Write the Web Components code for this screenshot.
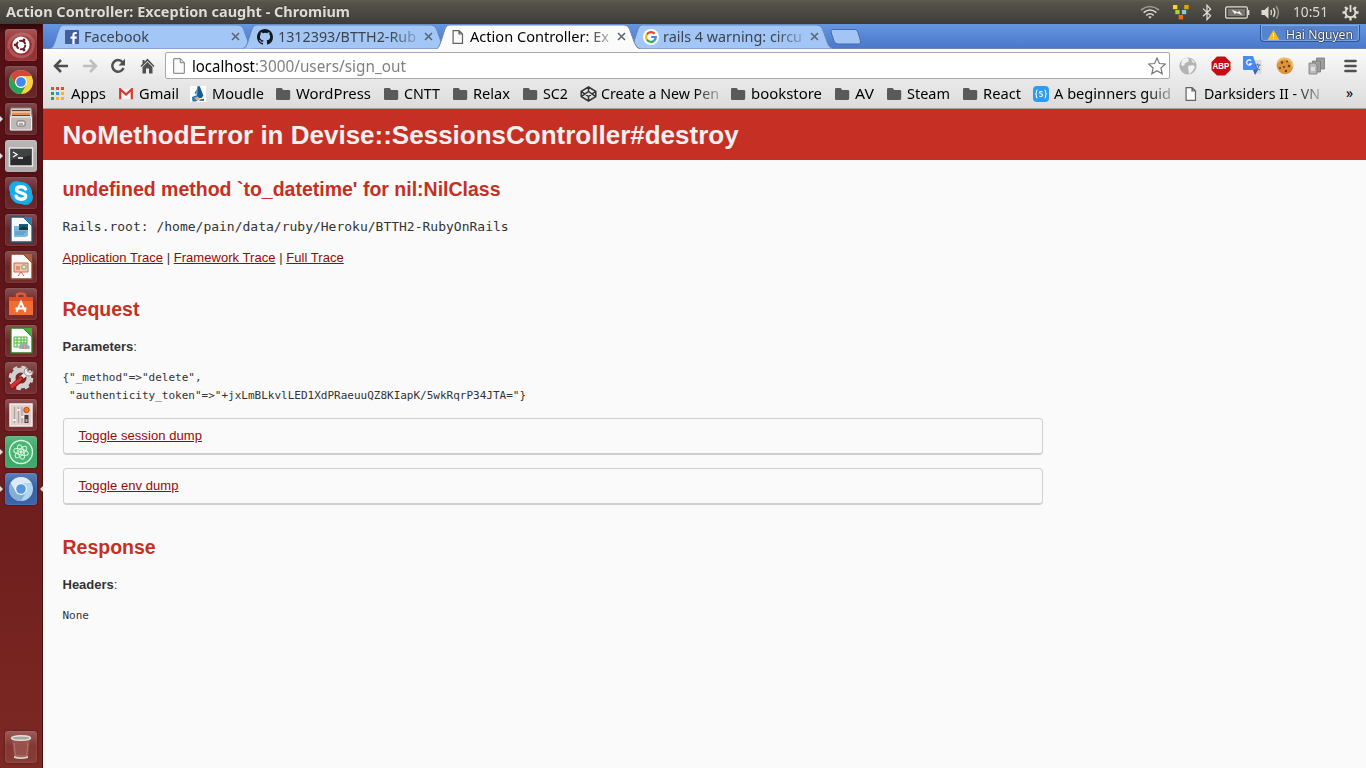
<!DOCTYPE html>
<html lang="en">
<head>
<meta charset="utf-8">
<title>Action Controller: Exception caught</title>
<style>
html,body{margin:0;height:100%;overflow:hidden;background:#fafafa}
</style>
</head>
<body>
<ubuntu-desktop></ubuntu-desktop>
<script>
const define = (name, html, setup) => customElements.define(name, class extends HTMLElement {
  connectedCallback() {
    if (this.shadowRoot) return;
    this.attachShadow({mode: 'open'}).innerHTML = typeof html === 'function' ? html(this) : html;
    if (setup) setup(this, this.shadowRoot);
  }
});

const ICONS = {
  fb: '<svg width="14" height="14" viewBox="0 0 14 14"><rect width="14" height="14" rx=".6" fill="#43609c"/><path d="M7.4 14V8.7H5.6V6.6h1.8V5c0-2 1.1-3 2.9-3h1.5v2h-1.1c-.9 0-1.1.4-1.1 1.1v1.5h2.2l-.3 2.1H9.6V14z" fill="#fff"/></svg>',
  github: '<svg width="16" height="16" viewBox="0 0 16 16"><path fill="#16191c" d="M8 0C3.58 0 0 3.58 0 8c0 3.54 2.29 6.53 5.47 7.59.4.07.55-.17.55-.38v-1.49c-2.01.37-2.53-.49-2.69-.94-.09-.23-.48-.94-.82-1.13-.28-.15-.68-.52-.01-.53.63-.01 1.08.58 1.23.82.72 1.21 1.87.87 2.33.66.07-.52.28-.87.51-1.07-1.78-.2-3.64-.89-3.64-3.95 0-.87.31-1.59.82-2.15-.08-.2-.36-1.02.08-2.12 0 0 .67-.21 2.2.82a7.6 7.6 0 0 1 4 0c1.53-1.04 2.2-.82 2.2-.82.44 1.1.16 1.92.08 2.12.51.56.82 1.27.82 2.15 0 3.07-1.87 3.75-3.65 3.95.29.25.54.73.54 1.48v2.2c0 .21.15.46.55.38A8 8 0 0 0 16 8c0-4.42-3.58-8-8-8z"/></svg>',
  doc: '<svg width="12" height="14" viewBox="0 0 12 14"><path d="M1.1.7h6L10.5 4v9.3H1.1zM7 .7V4h3.5" fill="#fbfbfb" stroke="#636363" stroke-width="1.2"/></svg>',
  google: '<svg width="16" height="16" viewBox="0 0 16 16"><circle cx="8" cy="8" r="8" fill="#fff"/><g fill="none" stroke-width="2.2"><path d="M3.8 5.6A4.8 4.8 0 0 1 11.6 4.8" stroke="#ea4335"/><path d="M3.8 5.5A4.8 4.8 0 0 0 3.9 10.6" stroke="#fbbc05"/><path d="M3.9 10.5A4.8 4.8 0 0 0 11.2 11.6" stroke="#34a853"/><path d="M8.2 8h4.6A4.8 4.8 0 0 1 11.1 11.7" stroke="#4285f4"/></g></svg>',
  apps: '<svg width="15" height="14" viewBox="0 0 15 14"><path fill="#e8453c" d="M1 0h3v3H1zM6 0h3v3H6zM11 0h3v3h-3z"/><path fill="#4587f4" d="M6 5h3v3H6z"/><path fill="#2ba14c" d="M1 5h3v3H1zM1 10h3v3H1z"/><path fill="#f9b80c" d="M11 5h3v3h-3zM6 10h3v3H6zM11 10h3v3h-3z"/></svg>',
  gmail: '<svg width="14" height="12" viewBox="0 0 14 12"><path d="M1 1h12v10H1z" fill="#f5f5f5"/><path d="M1.2 11.2V1.3L7 6.6l5.8-5.3v9.9" fill="none" stroke="#d5382e" stroke-width="2.2"/></svg>',
  moudle: '<svg width="16" height="16" viewBox="0 0 16 16"><path fill="#fdfdfd" d="M0 0h16v16H0z"/><path d="M7.4.2h2.4l3.6 9.6-2 2.5-4.4-.6z" fill="#155b94"/><path d="M7 3 4.6 6.8 6.4 9zM2 11l4.6-1.7 3 3.6L6 15.5H2.4z" fill="#2878b5"/><path d="m4 12 4-1.4 1.4 2.3L7 14.6z" fill="#e6b183"/><path d="m10 13.5 4-.8v2H9z" fill="#39556f"/></svg>',
  folder: '<svg width="15" height="12" viewBox="0 0 15 12"><path d="M0 1.2Q0 0 1.2 0h4.1q.7 0 1.1.8l.6 1.1h6Q14.2 2 14.2 3.1v7.5Q14.2 12 13 12H1.2Q0 12 0 10.7z" fill="#5a5a5a"/></svg>',
  codepen: '<svg width="17" height="16" viewBox="0 0 17 16"><g fill="none" stroke="#333" stroke-width="1.5" stroke-linejoin="round"><path d="m8.5 1 7.3 4.4v5.2L8.5 15 1.2 10.6V5.4zM8.5 1v4.5M8.5 15v-4.5M1.2 5.4l7.3 5.1 7.3-5.1M1.2 10.6l7.3-5.1 7.3 5.1"/></g></svg>',
  s: '<svg width="16" height="16" viewBox="0 0 16 16"><rect width="16" height="16" rx="4" fill="#2d9cf0"/><g fill="none" stroke="#e8f6ff" stroke-width="1.1"><path d="M4.6 4Q3.2 4 3.4 6T2.1 8q1.5 0 1.3 2T4.6 12M11.4 4q1.4 0 1.2 2T13.9 8q-1.5 0-1.3 2t-1.2 2"/><path d="M9.7 6.1C8.2 5.2 6.3 5.6 6.4 6.8s3.3.9 3.3 2.3-2.1 1.8-3.5.8"/></g></svg>'
};

/* Text squeezed to a fixed advance width so labels keep the metrics of the desktop font. */
define('fit-text', '<style>:host{display:inline-block;white-space:pre;overflow:visible;flex:none}:host([fade]){-webkit-mask-image:linear-gradient(90deg,#000 calc(100% - 26px),#0004 100%);mask-image:linear-gradient(90deg,#000 calc(100% - 26px),#0004 100%)}span{display:inline-block;transform-origin:0 50%}</style><span><slot></slot></span>', (el, root) => {
  const span = root.querySelector('span'), w = +el.getAttribute('w');
  const real = span.getBoundingClientRect().width;
  el.style.width = w + 'px';
  if (real) span.style.transform = `scaleX(${w / real})`;
});

define('top-panel', `<style>
:host{display:flex;align-items:center;height:24px;box-sizing:border-box;padding:0 7px 0 6px;background:linear-gradient(#5f5c50 0,#57544b 2px,#3e3d38 23px,#3b3a36);color:#dfdbd2;font:bold 14px/24px "Noto Sans",sans-serif}
svg{display:block;flex:none} .t{flex:1;text-shadow:0 -1px #3338} .c{font-weight:400;font-size:14.5px;margin-top:-2px}
.tray{display:flex;align-items:center}
</style>
<div class="t"><fit-text w="344">Action Controller: Exception caught - Chromium</fit-text></div>
<div class="tray">
<svg style="margin-right:13px" width="20" height="16" viewBox="0 0 20 16" fill="none" stroke="#dfdbd2" stroke-width="1.6"><path d="M1 6Q10-1 19 6" opacity=".55"/><path d="M3.6 8.7Q10 3.3 16.4 8.7"/><path d="M6.3 11.3Q10 8.2 13.7 11.3"/><path d="m8.2 12.8 1.8 2 1.8-2Q10 11.6 8.2 12.8" fill="#dfdbd2" stroke="none"/></svg>
<svg style="margin-right:13px" width="16" height="16" viewBox="0 0 16 16"><path fill="#ffd42a" d="M0 1h4.4v4.2H0z"/><path fill="#d8a900" d="M11.2 1h4.5v4.2h-4.5z"/><path fill="#a9d32d" d="M2.3 6h4.3v4.2H2.3z"/><path fill="#84c9de" d="M8.9 6h4.3v4.2H8.9z"/><path fill="#ff6600" d="M5.7 11H10v4.4H5.7z"/></svg>
<svg style="margin-right:13px" width="10" height="17" viewBox="0 0 10 17"><path d="m1 4.6 7.6 7.2L5 15.6V1.3l3.6 3.8L1 12.2" fill="none" stroke="#dfdbd2" stroke-width="1.3"/></svg>
<svg style="margin-right:11px" width="25" height="13" viewBox="0 0 25 13"><rect x=".7" y=".8" width="21.6" height="11.4" rx="1.5" fill="none" stroke="#dfdbd2" stroke-width="1.3"/><path d="M3 3h17v7H3z" fill="#77746d"/><path d="m6 3 7 3 .9-2L18 9.8l-7-2.700-.9 2z" fill="#f4f1ea" stroke="#4b4943" stroke-width=".3"/><path d="M23.6 4v5" stroke="#dfdbd2" stroke-width="1.5"/></svg>
<svg style="margin-right:12px" width="20" height="15" viewBox="0 0 20 15"><path d="M.5 5h3l4-3.7v12.4l-4-3.7h-3z" fill="#dfdbd2"/><g fill="none" stroke="#dfdbd2" stroke-width="1.5"><path d="M9.8 5q1.5 2.5 0 5"/><path d="M12.4 3.2q2.8 4.3 0 8.6"/><path d="M15.2 1.2q4.4 6.3 0 12.6" opacity=".5"/></g></svg>
<fit-text class="c" w="35">10:51</fit-text>
<svg style="margin-left:14px" width="17" height="17" viewBox="0 0 17 17" fill="none" stroke="#dfdbd2"><path d="M6 4A5 5 0 1 0 11 4" stroke-width="2"/><path d="M8.5 1v7" stroke-width="1.8"/><path d="M3 3l2 2M14 3l-2 2M.5 8.5h3M16.5 8.5h-3M3 14l2-2M14 14l-2-2M8.5 16.5v-3" stroke-width="2.3"/></svg>
</div>`);

/* One launcher tile: glossy rounded square with optional running/focus arrows. */
define('launcher-tile', el => `<style>
:host{display:block;height:32px;margin:0 0 5px 5px;width:32px;position:relative}
.b{width:32px;height:32px;border-radius:3px;background:linear-gradient(#ffffff38,#ffffff0a 48%,#ffffff12),${el.getAttribute('tint') || '#ffffff08'};box-shadow:inset 0 0 1px 1px #ffffff14,0 0 2px #0008}
svg{display:block}
:host([run])::before,:host([focus])::after{content:"";position:absolute;top:13px;border:3px solid transparent}
:host([run])::before{left:-5px;border-left-color:#ddd;border-right:0}
:host([focus])::after{left:35px;border-right-color:#ddd;border-left:0}
</style><div class="b"><slot></slot></div>`);

const office = (c, light, art) => `<svg width="32" height="32" viewBox="0 0 32 32"><path d="M6 3h13l8 8v17H6z" fill="#fafafa" stroke="${c}" stroke-width="1.3"/><path d="M18 3h9v9z" fill="${light}"/><path d="m18 3 9 9" stroke="${c}"/>${art}</svg>`;
const chrome = (a,b,c,d,e) => `<svg width="32" height="32" viewBox="0 0 32 32"><circle cx="16" cy="16" r="12" fill="${a}"/><path d="M5.6 10A12 12 0 0 1 26.4 10H16L10.8 19z" fill="${b}"/><path d="M5.6 10A12 12 0 0 0 16 28L21.2 19H10.8z" fill="${c}"/><circle cx="16" cy="16" r="6" fill="${e}"/><circle cx="16" cy="16" r="4.8" fill="${d}"/></svg>`;

define('app-launcher', `<style>
:host{display:flex;flex-direction:column;box-sizing:border-box;width:43px;padding-top:5px;background:linear-gradient(#2d080b 0,#541015 10px,#5a1217 150px,#681a1c 370px,#7d2823 744px);border-right:1px solid #4b1112}
.sp{flex:1} svg{display:block}
</style>
<launcher-tile tint="#8f2528"><svg width="32" height="32" viewBox="0 0 32 32"><path d="M4 20Q2 8 16 5Q27 5 28 14M28 10Q30 26 17 28Q7 27 5 20" fill="none" stroke="#dc9a9a" stroke-width="3" opacity=".35"/><circle cx="16" cy="16" r="8.6" fill="#fff"/><circle cx="16" cy="16" r="4.3" fill="none" stroke="#672024" stroke-width="1.9" stroke-dasharray="7.6 1.4"/><g fill="#672024"><circle cx="10.2" cy="16" r="1.4"/><circle cx="19" cy="10.9" r="1.4"/><circle cx="19" cy="21.1" r="1.4"/></g></svg></launcher-tile>
<launcher-tile>${chrome('#ffd040','#db4437','#27a35a','#4387f0','#fff')}</launcher-tile>
<launcher-tile run><svg width="32" height="32" viewBox="0 0 32 32"><path d="M6 5h20l1 8v14H5V13z" fill="#d2d0cd" stroke="#8d8885"/><path d="M7 7h18v6H7z" fill="#54433f"/><path d="M7 8h18v4H7z" fill="#ec8a4f"/><path d="M7 9h18" stroke="#f9e5cb"/><path d="M5.5 14h21v13h-21z" fill="#bdbab7" stroke="#eee"/><rect x="12" y="18" width="8" height="5" rx="1" fill="#eee" stroke="#78716e"/><path d="M14 21h4" stroke="#65605c"/></svg></launcher-tile>
<launcher-tile run tint="#aaa5a4"><svg width="32" height="32" viewBox="0 0 32 32"><path d="M4.5 8h23v18h-23z" fill="#282a2b" stroke="#e8e8e5" stroke-width="1.5"/><path d="M5.5 9h21v6l-21 5z" fill="#53585a" opacity=".55"/><path d="m8 12 4 2.5L8 17M13 18h5" fill="none" stroke="#fff" stroke-width="1.3"/></svg></launcher-tile>
<launcher-tile><svg width="32" height="32" viewBox="0 0 32 32"><circle cx="11.5" cy="11.5" r="7.5" fill="#16a9e5"/><circle cx="20.5" cy="20.5" r="7.5" fill="#16a9e5"/><circle cx="16" cy="16" r="11" fill="#18ade9"/><path d="M20.5 12C18.5 8.6 11.3 9.2 11.6 12.900S20.7 15 20.7 19.100 12.5 23.200 11 19.200" fill="none" stroke="#fff" stroke-width="3.400" stroke-linecap="round"/></svg></launcher-tile>
<launcher-tile>${office('#225777','#2e7dad','<path d="M9 12h14v10l-3 1H9z" fill="#7db7db"/><path d="M14 10h9v6h-9z" fill="#16607e"/><path d="M14 15q4-5 9-1v2h-9z" fill="#123c42"/><path d="M10 18h11M10 20h9" stroke="#4c91bd"/>')}</launcher-tile>
<launcher-tile>${office('#8f4425','#ae633d','<path d="M9 12h14v9H9z" fill="#f2c5ac" stroke="#cf6a44"/><path d="M11 16h4M11 18h4" stroke="#c75d38"/><circle cx="19" cy="16" r="2.2" fill="#e7f2d0" stroke="#749569"/><path d="m13 25 3-4 3 4" fill="none" stroke="#bd6b4d"/>')}</launcher-tile>
<launcher-tile><svg width="32" height="32" viewBox="0 0 32 32"><path d="M12 9V7.5q0-2 4-2t4 2V9" fill="none" stroke="#e05a35" stroke-width="2.6"/><path d="M4 9h24v18H4z" fill="#f06c32"/><path d="M4 9h24v4H4z" fill="#dc5225"/><path d="m11.5 24 4.5-10 4.5 10M10.5 20.5h11" fill="none" stroke="#fff" stroke-width="2"/></svg></launcher-tile>
<launcher-tile>${office('#278025','#48ad37','<path d="M9 12h13v10H9z" fill="#ddf4d6" stroke="#58b645"/><path d="M9 15h13M9 18h13M12 12v10M16 12v10M19 12v10" stroke="#58b645"/><path d="M15 24v-4h3v4M18 24v-6h3v6M21 24v-3h3v3" fill="#ef9d65" stroke="#6aa9d3"/>')}</launcher-tile>
<launcher-tile><svg width="32" height="32" viewBox="0 0 32 32"><circle cx="16" cy="16" r="8" fill="none" stroke="#d3cfcc" stroke-width="5"/><circle cx="16" cy="16" r="10.8" fill="none" stroke="#d3cfcc" stroke-width="3" stroke-dasharray="4.5 4"/><path d="m15 17 7-6" stroke="#eee" stroke-width="4"/><path d="M19 10q0-4 4-4l-1 3 3 2 3-2q0 5-5 5-3 0-4-4" fill="#eee" stroke="#99918e"/><path d="m7 25 9-8" stroke="#8d1718" stroke-width="5.2" stroke-linecap="round"/><path d="m7 24.5 8.5-7.5" stroke="#d43231" stroke-width="3.3" stroke-linecap="round"/></svg></launcher-tile>
<launcher-tile><svg width="32" height="32" viewBox="0 0 32 32"><path d="M5 5h22v22H5z" fill="#dfcfcd" stroke="#f4eeec" stroke-width="1.5"/><path d="M9.5 8v16M13.5 8v16M17 8v16" stroke="#b09e9b" stroke-width="1.2"/><path d="M8 21h3M12 11h3M16 18h3" stroke="#fff" stroke-width="1.5"/><circle cx="21.5" cy="11" r="2.7" fill="#f47c1d" stroke="#a94f28"/><path d="M19.5 16h4v8h-4z" fill="#413c3c"/><path d="M20.5 20h2v3h-2z" fill="#aaa"/></svg></launcher-tile>
<launcher-tile run tint="#34a161"><svg width="32" height="32" viewBox="0 0 32 32" fill="none" stroke="#d6fbdd"><circle cx="16" cy="16" r="11.5" fill="#4ab474" stroke-width="1.4"/><ellipse cx="16" cy="16" rx="7.5" ry="2.8" transform="rotate(15 16 16)"/><ellipse cx="16" cy="16" rx="7.5" ry="2.8" transform="rotate(75 16 16)"/><ellipse cx="16" cy="16" rx="7.5" ry="2.8" transform="rotate(135 16 16)"/><circle cx="16" cy="16" r="1.2" fill="#d6fbdd"/></svg></launcher-tile>
<launcher-tile run focus tint="#3059a2">${chrome('#b2d5ee','#dceaf5','#85add6','#5897d9','#edf6fd')}</launcher-tile>
<div class="sp"></div>
<launcher-tile><svg width="32" height="32" viewBox="0 0 32 32"><path d="m7 7 2 19h14l2-19z" fill="#a3605a" opacity=".6"/><path d="m9 12 1.5 13h11L23 12" fill="none" stroke="#b5807a" stroke-width=".8"/><ellipse cx="16" cy="7" rx="9.5" ry="2.3" fill="#a9a39d" stroke="#e5e2dd" stroke-width="1.5"/><path d="M9 25q7 2.5 14 0v2q-7 2-14 0z" fill="#d4d2cb"/></svg></launcher-tile>`);

define('browser-tab', el => {
  const on = el.hasAttribute('active'), y = on ? 25.5 : 24.5;
  return `<style>
:host{display:flex;position:relative;align-items:center;width:205px;height:25px;margin-right:-12px;flex:none;box-sizing:border-box;padding:0 0 0 15px;font:15px/23px "Noto Sans",sans-serif;color:${on ? '#000' : '#3c4450'};z-index:${on ? 3 : 1}}
.bg{position:absolute;left:0;top:0;z-index:-1}
.ic{width:${el.getAttribute('iw')||19}px;flex:none;display:flex}
.ic svg{display:block}.x{position:absolute;right:15px;top:8px}
fit-text{margin-top:-1px}
</style>
<svg class="bg" width="205" height="25"><path d="M0 ${y}Q3 24 4.5 19L9 5Q10.5 1 13 1H188Q192 1 193.500 5L198.500 19Q200 24 205 ${y}" fill="${on?'#fbfbfb':'#a2c6f5'}" stroke="${on?'#7187aa':'#6486b9'}"/></svg>
<span class="ic">${ICONS[el.getAttribute('icon')]}</span><fit-text w="${el.getAttribute('tw')}" ${el.hasAttribute('fade')?'fade':''}>${el.textContent}</fit-text>
<svg class="x" width="9" height="9"><path d="m1 1 7 7m0-7L1 8" stroke="#5e6673" stroke-width="1.6"/></svg>`;
});

define('tab-strip', `<style>
:host{display:flex;height:25px;box-sizing:border-box;padding-left:7px;background:linear-gradient(#6695e0,#4a78cc);border-bottom:1px solid #6b85b0;position:relative}
.new{margin:5px 0 0 8px;flex:none}
.sp{flex:1}
.u{display:flex;align-items:center;width:100px;height:17px;margin:1px 6px 0 0;border:1px solid #2f5496;border-top:0;border-radius:0 0 4px 4px;background:#5684cf;box-shadow:inset 0 0 0 1px #7fa5e2;color:#fff;font:13px/17px "Noto Sans",sans-serif;text-shadow:0 0 2px #000,0 0 1px #000;box-sizing:border-box;padding:3px 0 0 6px;gap:6px}
</style>
<browser-tab icon="fb" tw="65">Facebook</browser-tab>
<browser-tab icon="github" iw="21" tw="138" fade style="padding-left:14px">1312393/BTTH2-Rub</browser-tab>
<browser-tab active icon="doc" iw="18" tw="139" fade style="padding-left:16px">Action Controller: Ex</browser-tab>
<browser-tab icon="google" iw="20" tw="139" fade style="padding-left:14px">rails 4 warning: circu</browser-tab>
<svg class="new" width="32" height="16" viewBox="0 0 32 16"><path d="M3 .5h22q2 0 3 2.5l2.5 9q.5 3-1.5 3H8q-3 0-4-3L1 3Q.5.5 3 .5z" fill="#a2c5f3" stroke="#456ca9"/></svg>
<div class="sp"></div>
<div class="u"><svg width="13" height="12"><path d="M6.5 1 12.5 11H.5z" fill="#fbbc16"/><path d="M6.5 4v4M6.5 9v1" stroke="#fff3c2" stroke-width="1.2"/></svg><fit-text w="67">Hai Nguyen</fit-text></div>`);

define('nav-bar', `<style>
:host{display:flex;align-items:center;height:31px;padding:2px 9px 0 10px;box-sizing:border-box;background:linear-gradient(#fbfbfb,#e9e9e9)}
svg{display:block;flex:none}
.om{display:flex;align-items:center;width:1005px;height:27px;margin-left:10px;background:#fff;border:1px solid #a9a9a9;border-radius:2px;box-sizing:border-box;padding:0 3px 0 7px;font:16.5px/25px "Noto Sans",sans-serif;color:#808080;flex:none}
.h{color:#000}.sp{flex:1}.ext{display:flex;align-items:center;flex:1;padding-left:9px}
</style>
<svg width="16" height="14" viewBox="0 0 16 14"><path d="M8 1 2 7l6 6M2 7h13" fill="none" stroke="#4e4e4e" stroke-width="2.5"/></svg>
<svg style="margin-left:13px" width="16" height="14" viewBox="0 0 16 14"><path d="m8 1 6 6-6 6M14 7H1" fill="none" stroke="#bebebe" stroke-width="2.5"/></svg>
<svg style="margin-left:12px" width="16" height="16" viewBox="0 0 16 16"><path d="M12.6 4.2A5.8 5.8 0 1 0 13.5 10" fill="none" stroke="#505050" stroke-width="2.5"/><path d="M15 .7v6.8H8.5z" fill="#505050"/></svg>
<svg style="margin-left:14px" width="15" height="16" viewBox="0 0 15 16"><path d="M7.5.5 14.5 8l-1 1-6-6-6 6-1-1 2-2.3V2h2v1.7z" fill="#505050"/><path d="m2.5 9 5-5 5 5v6.5H9v-5H6v5H2.5z" fill="#505050"/></svg>
<div class="om"><svg width="12" height="16" viewBox="0 0 12 16"><path d="M.7.7h6.6l4 4v10.6H.7zM7.3.7v4h4" fill="#fafafa" stroke="#777"/></svg><fit-text class="h" w="63" style="margin-left:7px">localhost</fit-text><fit-text w="151">:3000/users/sign_out</fit-text><span class="sp"></span><svg width="18" height="18" viewBox="0 0 18 18"><path d="m9 1 2.4 5.5 6 .5-4.5 4 1.3 5.8L9 13.7l-5.2 3.1L5.1 11 .6 7l6-.5z" fill="#fff" stroke="#777" stroke-width="1.2"/></svg></div>
<div class="ext">
<svg width="18" height="18" viewBox="0 0 18 18"><circle cx="9" cy="9" r="8.6" fill="#b4b4b4"/><path d="M3 3Q7-.5 10 2l-1 3-3 1-1 3-3-1zM9 9l5-1 2 2-3 5-3 2zM12 2l4 3-2 1z" fill="#f1f1f1"/></svg>
<svg style="margin-left:14px" width="20" height="20" viewBox="0 0 20 20"><path d="M6 .5h8l5.5 5.5v8L14 19.5H6L.5 14V6z" fill="#c70d13"/><text transform="scale(1 1.18)" x="1.6" y="11.3" font-family="Liberation Sans" font-weight="700" font-size="8" fill="#fff">ABP</text></svg>
<svg style="margin-left:12px" width="19" height="19" viewBox="0 0 19 19"><path d="M8 4h10.5v14H12z" fill="#dcdcdc"/><path d="M0 0h10l5 14H1q-1 0-1-1z" fill="#4a8af4"/><path d="m10 14 5 0-3 5z" fill="#3763c5"/><path d="M8.2 4.8a2.6 2.6 0 1 0 .3 3H6.2" fill="none" stroke="#fff" stroke-width="1.2"/><path d="M11.5 9h6M14.5 7.5V9M12 14q4-1 4-5M12.5 10q1 3 4.5 4" fill="none" stroke="#536e99"/></svg>
<svg style="margin-left:14px" width="18" height="18" viewBox="0 0 18 18"><path d="M9 .7q5 0 7 4t1 6q-2 6.500-8 6.500T.7 10Q0 3 6 1z" fill="#dc943d"/><path d="M2 5Q5 0 11 2t5 8" fill="none" stroke="#f1bb67" stroke-width="2"/><g fill="#78390f"><circle cx="6" cy="5.500" r="1.200"/><circle cx="11" cy="4.500" r="1"/><circle cx="8" cy="10" r="1.100"/><circle cx="13" cy="9" r="1.300"/><circle cx="4" cy="11" r="1"/><circle cx="10" cy="14" r="1.200"/></g></svg>
<svg style="margin-left:14px" width="18" height="18" viewBox="0 0 18 18"><g fill="#9e9e9e" stroke="#777" stroke-width=".8"><path d="M8.5 1h8v11h-8z"/><path d="M4.5 4h8v11h-8z"/><path d="M1 6h6l2 2v9H1z" fill="#bababa"/></g><path d="M3 10h4v4H3z" fill="#ddd"/></svg>
<span class="sp"></span><svg width="13" height="14"><path d="M1.5 2h10M1.5 7h10M1.5 12h10" stroke="#505050" stroke-width="2.7" stroke-linecap="round"/></svg>
</div>`);

const marks = [
['apps',69,21,35,'Apps'],['gmail',71,20,40,'Gmail'],['moudle',86,22,52,'Moudle'],['folder',108,20,75,'WordPress'],['folder',69,20,36,'CNTT'],['folder',70,20,37,'Relax'],['folder',57,20,25,'SC2'],['codepen',151,21,118,'Create a New Pen',1],['folder',104,20,71,'bookstore'],['folder',52,20,19,'AV'],['folder',76,20,43,'Steam'],['folder',70,20,38,'React'],['s',152,21,117,'A beginners guid',1],['doc',160,19,116,'Darksiders II - VN',1]];
define('bookmark-item', el => `<style>:host{display:flex;align-items:center;min-width:0}.i{flex:none;display:flex}fit-text{margin-top:-2px}</style><span class="i" style="width:${el.dataset.iw}px">${ICONS[el.dataset.icon]}</span><fit-text w="${el.dataset.tw}" ${el.dataset.fade ? 'fade' : ''}>${el.textContent}</fit-text>`);
define('bookmarks-bar', `<style>
:host{display:grid;grid-template-columns:${marks.map(m => m[1] + 'px').join(' ')} 1fr;height:29px;box-sizing:border-box;padding-left:7px;border-bottom:1px solid #a3a3a3;background:linear-gradient(#e9e9e9,#dcdcdc);font:15px/28px "Noto Sans",sans-serif;color:#000;align-items:center}
.m{font-size:14px;padding-left:1px;margin-top:-2px}</style>${marks.map(m => `<bookmark-item data-icon="${m[0]}" data-iw="${m[2]}" data-tw="${m[3]}" ${m[5] ? 'data-fade="1"' : ''}>${m[4]}</bookmark-item>`).join('')}<span class="m">»</span>`);

define('dump-box', `<style>:host{display:block;width:980px;height:37px;box-sizing:border-box;border:1px solid #d0d0d0;border-bottom-width:2px;border-radius:4px;padding:8px 15px;margin:0 0 13px}a{color:#980905;text-decoration:underline;letter-spacing:.07px}</style><a><slot></slot></a>`);

define('error-page', `<style>
:host{display:block;flex:1;background:#fafafa;color:#333;font:13px/18px "Liberation Sans",Arial,sans-serif}
header{background:#c52f24;color:#f0f0f0;height:51px;box-sizing:border-box;padding:12px 19.5px 0}
h1{font-size:26px;line-height:28.6px;margin:0}
main{padding:0 19.5px}
h2{color:#c52f24;font-size:19.5px;line-height:25px;margin:0}
p,pre{margin:0}pre{font:11px/18px "DejaVu Sans Mono",monospace}.root{font-size:13px}
a{color:#980905;text-decoration:underline;letter-spacing:.05px}
</style>
<header><h1>NoMethodError in Devise::SessionsController#destroy</h1></header>
<main>
<h2 style="padding-top:17px">undefined method \`to_datetime' for nil:NilClass</h2>
<pre class="root" style="margin-top:16px">Rails.root: /home/pain/data/ruby/Heroku/BTTH2-RubyOnRails</pre>
<p style="margin-top:13px"><a>Application Trace</a> | <a>Framework Trace</a> | <a>Full Trace</a></p>
<h2 style="margin-top:30px">Request</h2>
<p style="margin-top:16px"><b>Parameters</b>:</p>
<pre style="margin:13px 0">{"_method"=>"delete",
 "authenticity_token"=>"+jxLmBLkvlLED1XdPRaeuuQZ8KIapK/5wkRqrP34JTA="}</pre>
<dump-box>Toggle session dump</dump-box>
<dump-box>Toggle env dump</dump-box>
<h2 style="margin-top:30px">Response</h2>
<p style="margin-top:16px"><b>Headers</b>:</p>
<pre style="margin-top:13px">None</pre>
</main>`);

define('browser-window', `<style>:host{display:flex;flex-direction:column;min-width:0}</style><tab-strip></tab-strip><nav-bar></nav-bar><bookmarks-bar></bookmarks-bar><error-page></error-page>`);
define('ubuntu-desktop', `<style>:host{display:grid;grid-template:24px 744px/43px 1323px;width:1366px;height:768px;overflow:hidden}top-panel{grid-column:1/3}</style><top-panel></top-panel><app-launcher></app-launcher><browser-window></browser-window>`);
</script>
</body>
</html>
